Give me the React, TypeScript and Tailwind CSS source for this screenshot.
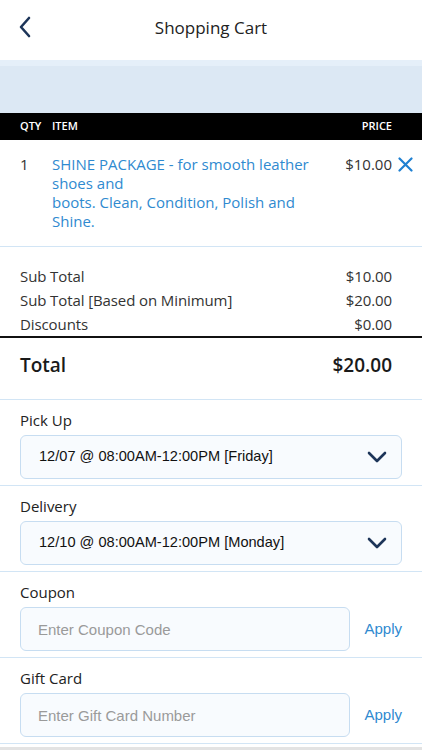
export default function App() {
  return (
    <div className="w-[422px] h-[750px] overflow-hidden bg-white font-['Open_Sans',sans-serif] text-[#222]">
      <header className="relative h-[60px] flex items-center justify-center bg-white">
        <button className="absolute left-[14px] top-[14px] w-[22px] h-[26px] flex items-center justify-center">
          <svg width="14" height="22" viewBox="0 0 14 22" fill="none">
            <path d="M11 2 L3 11 L11 20" stroke="#1d3559" strokeWidth="2.6" strokeLinecap="round" strokeLinejoin="round" />
          </svg>
        </button>
        <h1 className="text-[17px] text-[#222] -mt-[4px]">Shopping Cart</h1>
      </header>

      <div className="h-[53px] bg-[#dce8f4] border-t-[6px] border-[#e5eff9]" />

      <div className="h-[27px] bg-black flex items-center px-5 text-white text-[11px] font-semibold">
        <span className="w-8">QTY</span>
        <span>ITEM</span>
        <span className="ml-auto w-[38px] text-right">PRICE</span>
        <span className="w-[10px]" />
      </div>

      <div className="h-[107px] flex items-start pl-5 pr-[9px] pt-[15px] border-b border-[#d2e5f5] text-[15px] leading-[19px]">
        <span className="w-8 text-[#333]">1</span>
        <p className="w-[270px] text-[#2f8ad0]">
          SHINE PACKAGE - for smooth leather shoes and
          <br />
          boots. Clean, Condition, Polish and Shine.
        </p>
        <span className="ml-auto text-[#333]">$10.00</span>
        <svg className="ml-[6px] mt-[2px]" width="15" height="15" viewBox="0 0 15 15">
          <path d="M1.5 1.5 L13.5 13.5 M13.5 1.5 L1.5 13.5" stroke="#1f80d2" strokeWidth="2.2" strokeLinecap="round" />
        </svg>
      </div>

      <div className="pt-[17px] px-5 pr-[30px] text-[15px] leading-[24px] text-[#333] tracking-[-0.1px]">
        <div className="flex justify-between"><span>Sub Total</span><span>$10.00</span></div>
        <div className="flex justify-between"><span>Sub Total [Based on Minimum]</span><span>$20.00</span></div>
        <div className="flex justify-between"><span>Discounts</span><span>$0.00</span></div>
      </div>
      <div className="h-[2px] bg-[#111]" />

      <div className="h-[62px] flex justify-between px-5 pr-[30px] pt-[15px] text-[19px] leading-[24px] font-semibold text-[#1a1a1a] border-b border-[#d2e5f5]">
        <span>Total</span>
        <span>$20.00</span>
      </div>

      <SelectField label="Pick Up" value="12/07 @ 08:00AM-12:00PM [Friday]" />
      <SelectField label="Delivery" value="12/10 @ 08:00AM-12:00PM [Monday]" />
      <InputField label="Coupon" placeholder="Enter Coupon Code" />
      <InputField label="Gift Card" placeholder="Enter Gift Card Number" />
      <div className="h-[3px]" />
      <div className="h-[4px] bg-[#e3e3e3]" />
    </div>
  );
}

function SelectField({ label, value }: { label: string; value: string }) {
  return (
    <div className="h-[86px] px-5 pt-[10px] border-b border-[#d2e5f5]">
      <div className="text-[15px] leading-[20px] text-[#222]">{label}</div>
      <div className="mt-[5px] h-[44px] w-[382px] flex items-center pl-[18px] pr-[14px] rounded-[6px] border border-[#c7ddf1] bg-[#f8fbfe]">
        <span className="text-[14.6px] text-[#111] font-['Liberation_Sans',sans-serif]">{value}</span>
        <svg className="ml-auto" width="20" height="12" viewBox="0 0 20 12" fill="none">
          <path d="M2 2 L10 10 L18 2" stroke="#1d3559" strokeWidth="2.6" strokeLinecap="round" strokeLinejoin="round" />
        </svg>
      </div>
    </div>
  );
}

function InputField({ label, placeholder }: { label: string; placeholder: string }) {
  return (
    <div className="h-[86px] px-5 pt-[10px] border-b border-[#d2e5f5]">
      <div className="text-[15px] leading-[20px] text-[#222]">{label}</div>
      <div className="mt-[5px] flex items-center">
        <input
          className="h-[44px] w-[330px] pl-[17px] rounded-[6px] border border-[#c7ddf1] bg-[#f8fbfe] text-[15px] font-['Liberation_Sans',sans-serif] placeholder:text-[#9a9a9a] outline-none"
          placeholder={placeholder}
        />
        <span className="ml-auto text-[15px] text-[#2f8ad0] font-['Liberation_Sans',sans-serif]">Apply</span>
      </div>
    </div>
  );
}
